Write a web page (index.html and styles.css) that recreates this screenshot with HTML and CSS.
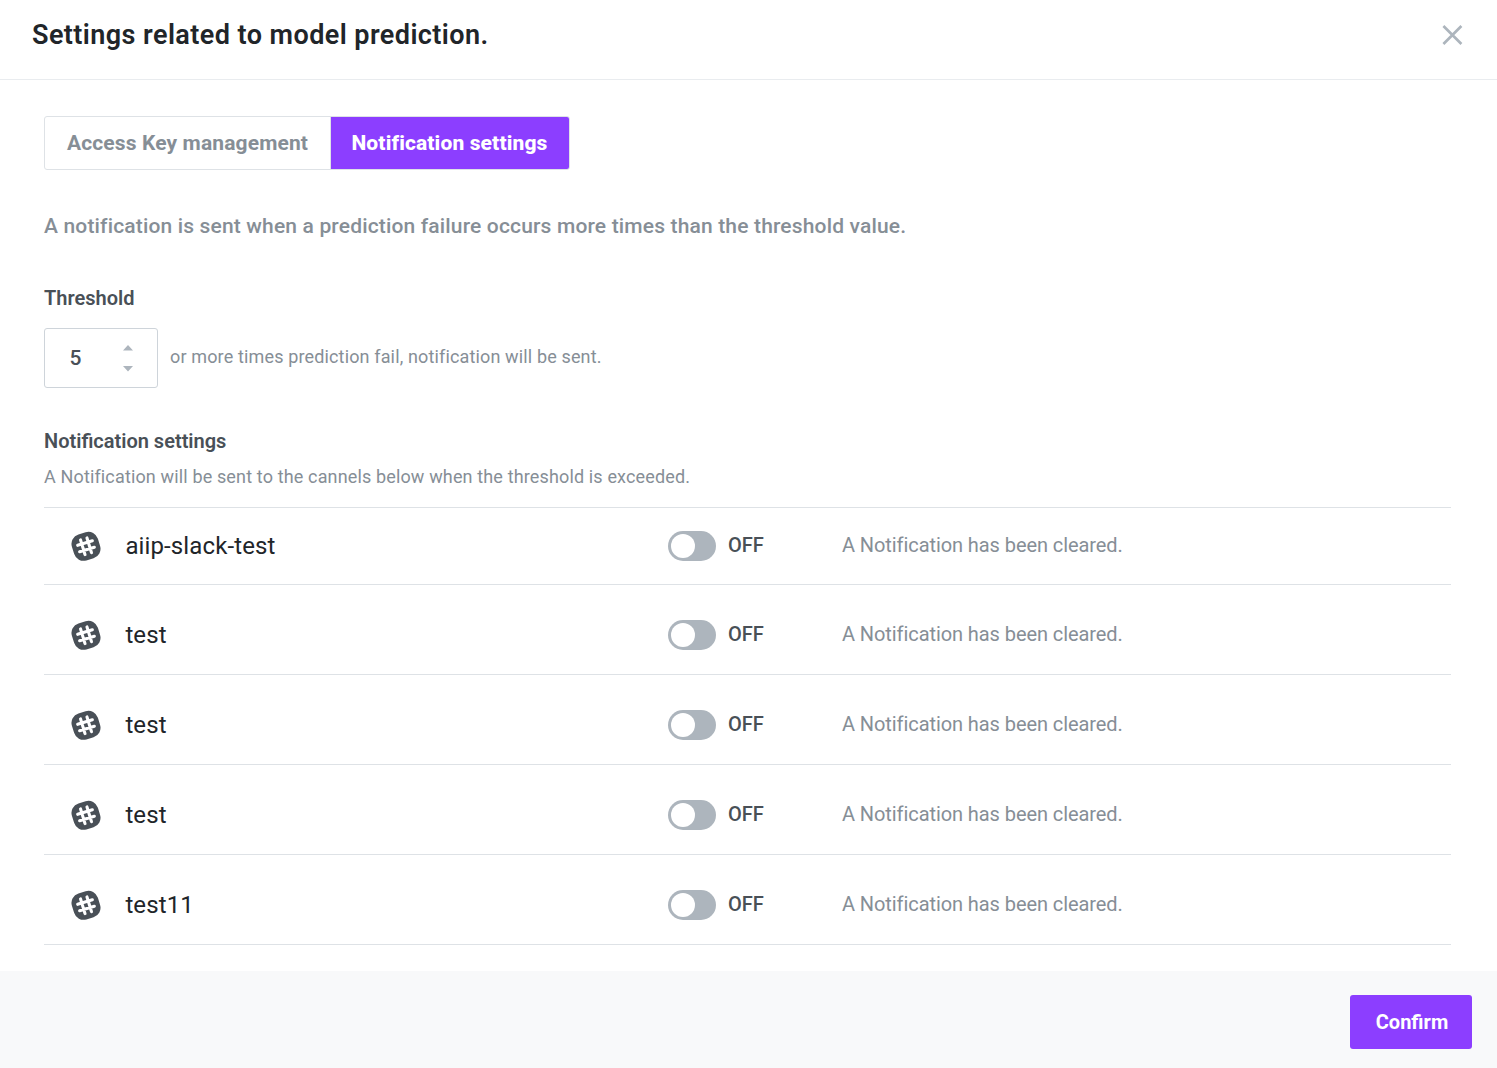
FILE: index.html
```html
<!DOCTYPE html>
<html lang="en">
<head>
<meta charset="utf-8">
<title>Settings related to model prediction.</title>
<link rel="stylesheet" href="styles.css">
</head>
<body>
<svg class="defs" width="0" height="0" aria-hidden="true">
  <symbol id="slack" viewBox="0 -0.3 32 32">
    <g transform="rotate(-17 16 16)">
      <rect x="1.5" y="1.5" width="29" height="29" rx="10.5" fill="#495057"/>
      <path d="M12.400 7.800v16.400M19.600 7.800v16.400M7.800 12.400h16.400M7.800 19.600h16.400" stroke="#fff" stroke-width="3.3" stroke-linecap="round"/>
    </g>
  </symbol>
</svg>
<div class="modal">
  <header class="header">
    <h1 class="title">Settings related to model prediction.</h1>
    <button class="close" aria-label="Close"><svg width="21" height="20" viewBox="0 0 21 20"><path d="M1.400 1l18 18M19.400 1l-18 18" stroke="#adb5bd" stroke-width="2.7"/></svg></button>
  </header>
  <main class="body">
    <div class="tabs">
      <button class="tab">Access Key management</button>
      <button class="tab tab-active">Notification settings</button>
    </div>
    <p class="lead">A notification is sent when a prediction failure occurs more times than the threshold value.</p>
    <h2 class="label">Threshold</h2>
    <div class="threshold">
      <div class="number">
        <span class="value">5</span>
        <svg class="arrows" width="10" height="28" viewBox="0 0 10 28"><path d="M0 6.500L5 1l5 5.500zM0 22L5 27.500l5-5.500z" fill="#adb5bd"/></svg>
      </div>
      <span class="hint">or more times prediction fail, notification will be sent.</span>
    </div>
    <h2 class="label label-channels">Notification settings</h2>
    <p class="desc">A Notification will be sent to the cannels below when the threshold is exceeded.</p>
    <ul class="list">
      <li class="row"><svg class="icon"><use href="#slack"/></svg><span class="name">aiip-slack-test</span><span class="toggle"></span><span class="state">OFF</span><span class="message">A Notification has been cleared.</span></li>
      <li class="row"><svg class="icon"><use href="#slack"/></svg><span class="name">test</span><span class="toggle"></span><span class="state">OFF</span><span class="message">A Notification has been cleared.</span></li>
      <li class="row"><svg class="icon"><use href="#slack"/></svg><span class="name">test</span><span class="toggle"></span><span class="state">OFF</span><span class="message">A Notification has been cleared.</span></li>
      <li class="row"><svg class="icon"><use href="#slack"/></svg><span class="name">test</span><span class="toggle"></span><span class="state">OFF</span><span class="message">A Notification has been cleared.</span></li>
      <li class="row"><svg class="icon"><use href="#slack"/></svg><span class="name">test11</span><span class="toggle"></span><span class="state">OFF</span><span class="message">A Notification has been cleared.</span></li>
    </ul>
  </main>
  <footer class="footer"><button class="confirm">Confirm</button></footer>
</div>
</body>
</html>
```
FILE: styles.css
```css
* { box-sizing: border-box; margin: 0; padding: 0; }
body { font-family: Roboto, sans-serif; background: #fff; color: #212529; overflow: hidden; }
button { font-family: inherit; border: 0; background: none; }
.defs { display: block; }
.modal { display: flex; flex-direction: column; height: 1068px; }
.header { display: flex; justify-content: space-between; align-items: center; height: 80px; padding: 0 34px 10px 32px; border-bottom: 1px solid #e9ecef; }
.title { font-size: 27px; font-weight: 600; line-height: 32px; letter-spacing: 0.43px; }
.close { display: flex; }
.body { flex: 1; padding: 36px 46px 0 44px; }
.tabs { display: flex; width: 526px; height: 54px; border: 1px solid #dee2e6; border-radius: 3px; }
.tab { width: 286px; font-size: 21px; font-weight: 700; line-height: 24px; letter-spacing: 0.13px; color: #868e96; border-right: 1px solid #dee2e6; }
.tab-active { width: 238px; padding-right: 1px; font-weight: 800; color: #fff; background: #8c3eff; border: 0; border-radius: 0 2px 2px 0; }
.lead { margin-top: 42px; font-size: 21px; font-weight: 500; line-height: 28px; letter-spacing: 0.16px; color: #868e96; }
.label { margin-top: 46px; font-size: 20px; font-weight: 600; line-height: 24px; color: #495057; }
.threshold { display: flex; align-items: center; margin-top: 18px; }
.number { display: flex; align-items: center; justify-content: space-between; width: 114px; height: 60px; padding: 0 24.3px 0 24.5px; border: 1px solid #ced4da; border-radius: 3px; }
.value { font-size: 21px; font-weight: 500; color: #495057; }
.hint { margin: 0 0 3px 12px; font-size: 18px; line-height: 24px; letter-spacing: 0.145px; color: #868e96; }
.label-channels { margin-top: 41px; }
.desc { margin-top: 12px; font-size: 18px; line-height: 24px; letter-spacing: 0.145px; color: #868e96; }
.list { margin-top: 18px; list-style: none; border-top: 1px solid #dee2e6; }
.row { display: grid; grid-template-columns: 54px 543px 60px 114px 1fr; align-items: center; height: 90px; padding: 11px 0 0 27px; border-bottom: 1px solid #dee2e6; }
.row:first-child { height: 77px; padding-top: 0; }
.icon { display: block; width: 30px; height: 30px; overflow: visible; }
.name { font-size: 24px; line-height: 30px; letter-spacing: 0.12px; padding-left: 0.4px; }
.toggle { width: 48px; height: 30px; padding: 3px; border-radius: 15px; background: #adb5bd; }
.toggle::before { content: ""; display: block; width: 24px; height: 24px; border-radius: 50%; background: #fff; }
.state { font-size: 20px; font-weight: 500; line-height: 28px; margin-bottom: 2px; color: #495057; }
.message { font-size: 20px; line-height: 28px; letter-spacing: -0.08px; margin-bottom: 2px; color: #868e96; }
.footer { display: flex; justify-content: flex-end; height: 97px; padding: 24px 25px 0 0; background: #f8f9fa; }
.confirm { width: 122px; height: 54px; padding-left: 2px; border-radius: 3px; background: #8c3eff; color: #fff; font-size: 20px; font-weight: 700; }
```
